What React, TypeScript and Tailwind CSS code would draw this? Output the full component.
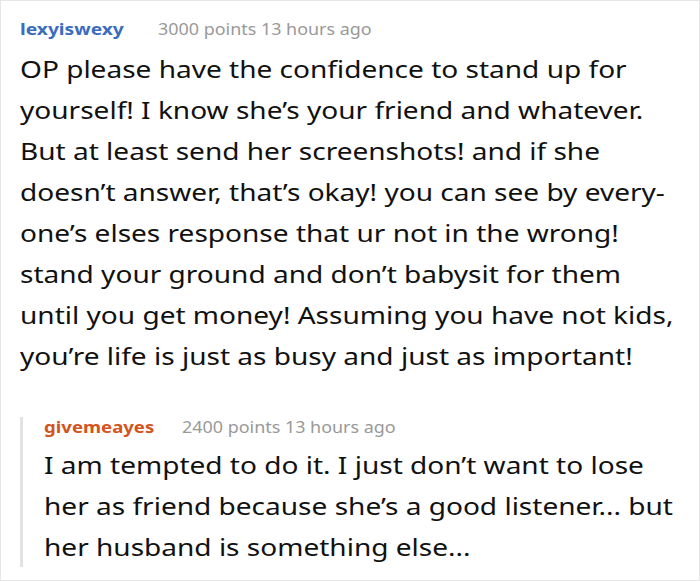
import React from 'react';

const font = { fontFamily: '"Noto Sans", "Open Sans", sans-serif' };

const mainLines = [
    'OP please have the confidence to stand up for',
    'yourself! I know she\u2019s your friend and whatever.',
    'But at least send her screenshots! and if she',
    'doesn\u2019t answer, that\u2019s okay! you can see by every-',
    'one\u2019s elses response that ur not in the wrong!',
    'stand your ground and don\u2019t babysit for them',
    'until you get money! Assuming you have not kids,',
    'you\u2019re life is just as busy and just as important!',
];

const replyLines = [
    'I am tempted to do it. I just don\u2019t want to lose',
    'her as friend because she\u2019s a good listener... but',
    'her husband is something else...',
];

// the source renders its text a little wide, so the glyphs are stretched sideways
const Meta = ({ name, color, stretch, gap, points }: { name: string; color: string; stretch: string; gap: string; points: string }) => (
    <div className="flex items-baseline h-[20px] leading-[20px] text-[16px] whitespace-nowrap">
        <span className={`inline-block origin-left font-bold ${stretch} ${color}`}>{name}</span>
        <span className={`inline-block origin-left scale-x-[1.12] ${gap} text-[#999999]`}>{points} points 13 hours ago</span>
    </div>
);

const Lines = ({ lines }: { lines: string[] }) => (
    <div className="text-[24px] leading-[41px]">
        {lines.map((l, i) => (
            <div key={i} className="whitespace-nowrap origin-left scale-x-[1.168]">{l}</div>
        ))}
    </div>
);

export default function App() {
    return (
        <div
            className="w-[700px] h-[581px] bg-white border border-[#e6e6e6] pl-[19px] pt-[18px] overflow-hidden text-[#111111]"
            style={font}
        >
            <Meta name="lexyiswexy" color="text-[#3a6cc0]" stretch="scale-x-[1.2]" gap="ml-[51px]" points="3000" />
            <div className="mt-[9px]">
                <Lines lines={mainLines} />
            </div>

            <div className="mt-[41px] border-l-[3px] border-[#e2e2e2] pl-[21px]">
                <Meta name="givemeayes" color="text-[#d4541e]" stretch="scale-x-[1.16]" gap="ml-[43px]" points="2400" />
                <div className="mt-[7px]">
                    <Lines lines={replyLines} />
                </div>
            </div>
        </div>
    );
}
